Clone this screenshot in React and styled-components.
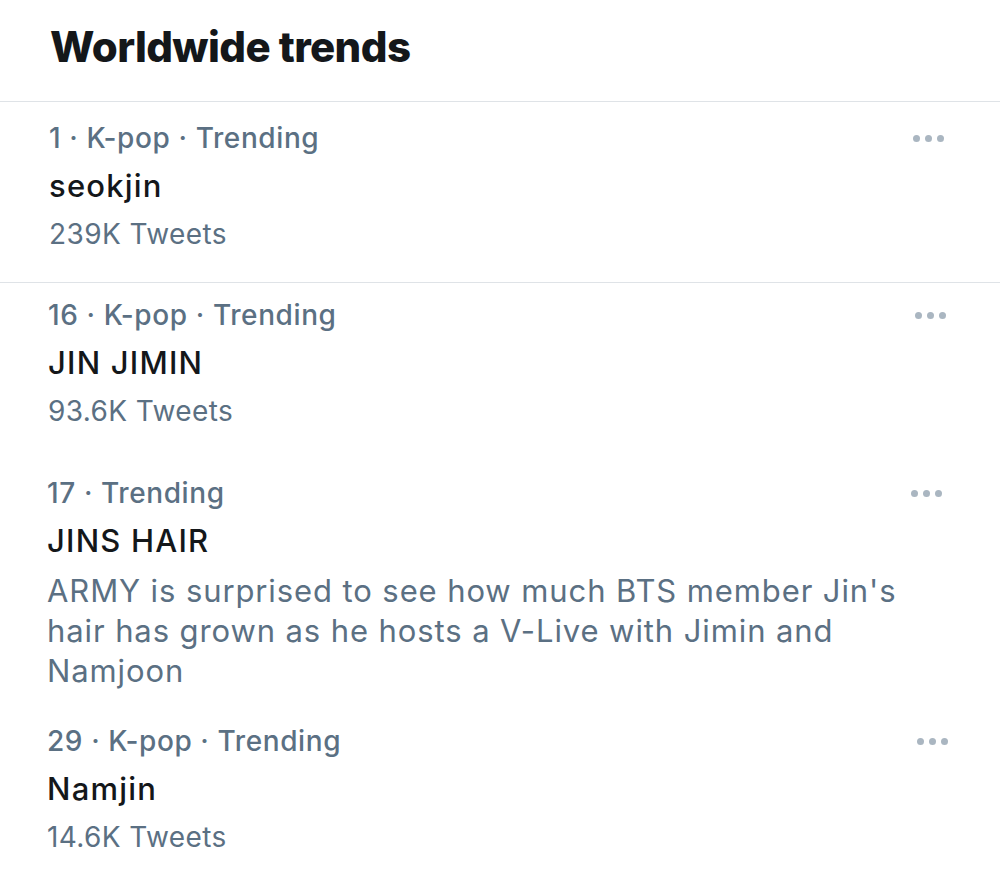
import React from 'react';
import styled, { createGlobalStyle } from 'styled-components';

const GlobalStyle = createGlobalStyle`
  body {
    margin: 0;
    background: #ffffff;
    font-family: Inter, "Noto Sans", "Liberation Sans", sans-serif;
    -webkit-font-smoothing: antialiased;
  }
`;

const Panel = styled.section`
  width: 1000px;
  background: #fff;
`;

const Header = styled.header`
  padding: 23px 50px 30px;
  border-bottom: 1px solid #dfe3e7;

  h1 {
    margin: 0;
    font-size: 42px;
    line-height: 48px;
    font-weight: 800;
    color: #14171a;
    letter-spacing: -0.6px;
  }
`;

const Item = styled.article`
  padding: ${({ $top }) => $top}px 54px ${({ $bottom }) => $bottom}px ${({ $left }) => $left}px;
  border-bottom: ${({ $line }) => ($line ? '1px solid #dfe3e7' : 'none')};
`;

const MetaRow = styled.div`
  display: flex;
  align-items: center;
  justify-content: space-between;
  height: 48px;
  font-size: 28px;
  font-weight: 500;
  letter-spacing: 0.6px;
  color: #5b7083;
`;

const Dots = styled.span`
  display: flex;
  gap: 5px;
  margin-right: ${({ $shift }) => $shift || 0}px;

  i {
    width: 7px;
    height: 7px;
    border-radius: 50%;
    background: #aab6c1;
  }
`;

const Name = styled.div`
  font-size: 31px;
  line-height: 48px;
  font-weight: 500;
  letter-spacing: 1.2px;
  color: #14171a;
`;

const Count = styled.div`
  font-size: 28px;
  line-height: 48px;
  letter-spacing: 0.4px;
  color: #5b7083;
`;

const Desc = styled.p`
  margin: 6px 0 0;
  max-width: 880px;
  font-size: 31px;
  line-height: 40px;
  letter-spacing: 0.9px;
  color: #5b7083;
`;

const trends = [
  { meta: '1 · K-pop · Trending', name: 'seokjin', count: '239K Tweets', top: 12, bottom: 24, left: 49, line: true, shift: 2 },
  { meta: '16 · K-pop · Trending', name: 'JIN JIMIN', count: '93.6K Tweets', top: 8, bottom: 25, left: 48, line: false, shift: 0 },
  {
    meta: '17 · Trending',
    name: 'JINS HAIR',
    desc: "ARMY is surprised to see how much BTS member Jin's hair has grown as he hosts a V-Live with Jimin and Namjoon",
    top: 9,
    bottom: 16,
    left: 47,
    line: false,
    shift: 4,
  },
  { meta: '29 · K-pop · Trending', name: 'Namjin', count: '14.6K Tweets', top: 10, bottom: 22, left: 47, line: false, shift: -2 },
];

const App = () => (
  <Panel>
    <GlobalStyle />
    <Header>
      <h1>Worldwide trends</h1>
    </Header>
    {trends.map((t) => (
      <Item key={t.name} $top={t.top} $bottom={t.bottom} $left={t.left} $line={t.line}>
        <MetaRow>
          <span>{t.meta}</span>
          <Dots $shift={t.shift}>
            <i />
            <i />
            <i />
          </Dots>
        </MetaRow>
        <Name>{t.name}</Name>
        {t.count && <Count>{t.count}</Count>}
        {t.desc && <Desc>{t.desc}</Desc>}
      </Item>
    ))}
  </Panel>
);

export default App;
